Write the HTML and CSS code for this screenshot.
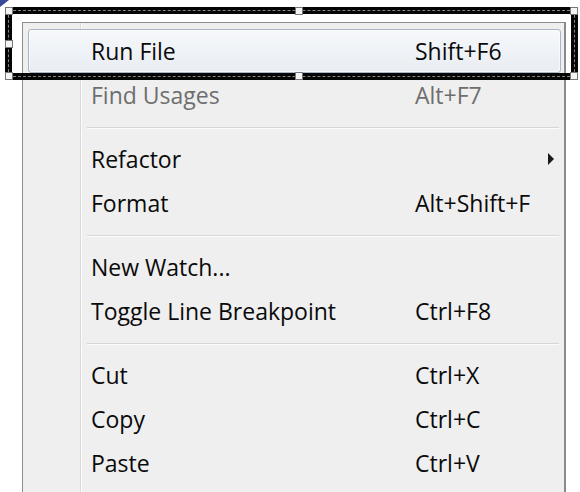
FILE: index.html
```html
<!DOCTYPE html>
<html>
<head>
<meta charset="utf-8">
<link rel="stylesheet" href="styles.css">
</head>
<body>
<div class="stage">
  <div class="menu">
    <div class="item hot"><span class="label">Run File</span><span class="key">Shift+F6</span></div>
    <div class="item disabled"><span class="label">Find Usages</span><span class="key">Alt+F7</span></div>
    <div class="sep"></div>
    <div class="item"><span class="label">Refactor</span><span class="key"></span><span class="arrow"></span></div>
    <div class="item"><span class="label">Format</span><span class="key">Alt+Shift+F</span></div>
    <div class="sep"></div>
    <div class="item"><span class="label">New Watch...</span><span class="key"></span></div>
    <div class="item"><span class="label">Toggle Line Breakpoint</span><span class="key">Ctrl+F8</span></div>
    <div class="sep"></div>
    <div class="item"><span class="label">Cut</span><span class="key">Ctrl+X</span></div>
    <div class="item"><span class="label">Copy</span><span class="key">Ctrl+C</span></div>
    <div class="item"><span class="label">Paste</span><span class="key">Ctrl+V</span></div>
  </div>
  <div class="marquee">
    <span class="h h-tl"></span><span class="h h-tm"></span><span class="h h-tr"></span>
    <span class="h h-ml"></span>
    <span class="h h-bl"></span><span class="h h-bm"></span><span class="h h-br"></span>
  </div>
  <svg class="cursor" width="10" height="8" viewBox="0 0 10 8"><path d="M0 0 L9 0 L0 7 Z" fill="#3a4a9a"/></svg>
</div>
</body>
</html>
```
FILE: styles.css
```css
html, body {
  margin: 0;
  padding: 0;
  background: #ffffff;
  width: 580px;
  height: 492px;
  overflow: hidden;
}
.stage {
  position: relative;
  padding: 22px 0 0 22px;
  font-family: "Open Sans", "Noto Sans", sans-serif;
}
.menu {
  width: 533px;
  border: 1px solid #8c8c8c;
  border-right: 2px solid #8a8a8a;
  border-bottom: none;
  background: #efefef;
  padding: 6px 3px 10px 5px;
  background-image: linear-gradient(to right, transparent 57px, #d9d9d9 57px, #d9d9d9 58px, #fbfbfb 58px, #fbfbfb 59px, transparent 59px);
}
.item {
  position: relative;
  display: flex;
  align-items: center;
  height: 44px;
  box-sizing: border-box;
  font-size: 23px;
  color: #0a0a0a;
  border: 1px solid transparent;
  border-radius: 3px;
}
.item.hot {
  border-color: #a9b6c6;
  background: linear-gradient(to bottom, #f6f8fa, #e8edf3);
  box-shadow: inset 0 0 0 1px rgba(255,255,255,0.6);
}
.item.disabled {
  color: #6e6e6e;
}
.label {
  width: 324px;
  padding-left: 62px;
}
.key {
  flex: 1;
}
.arrow {
  position: absolute;
  right: 6px;
  top: 15px;
  width: 0;
  height: 0;
  border-top: 6px solid transparent;
  border-bottom: 6px solid transparent;
  border-left: 6px solid #1a1a1a;
}
.sep {
  height: 20px;
  margin-left: 59px;
  margin-right: 2px;
  background: linear-gradient(to bottom, transparent 10px, #d6d6d6 10px, #d6d6d6 11px, #fcfcfc 11px, #fcfcfc 12px, transparent 12px);
}
.marquee {
  position: absolute;
  left: 5px;
  top: 7px;
  width: 559px;
  height: 59px;
  border: 7px solid #050505;
}
.marquee::before {
  content: "";
  position: absolute;
  left: -4px;
  top: -4px;
  right: -4px;
  bottom: -4px;
  border: 1px dashed rgba(255,255,255,0.5);
}
.h {
  position: absolute;
  width: 6px;
  height: 6px;
  background: #f4f4f4;
  border: 1px solid #777;
}
.h-tl { left: -7px; top: -7px; }
.h-tm { left: 283px; top: -7px; }
.h-tr { right: -7px; top: -7px; }
.h-ml { left: -7px; top: 26px; }
.h-bl { left: -7px; bottom: -7px; }
.h-bm { left: 283px; bottom: -7px; }
.h-br { right: -7px; bottom: -7px; }
.cursor {
  position: absolute;
  left: 0;
  top: 0;
}
```
